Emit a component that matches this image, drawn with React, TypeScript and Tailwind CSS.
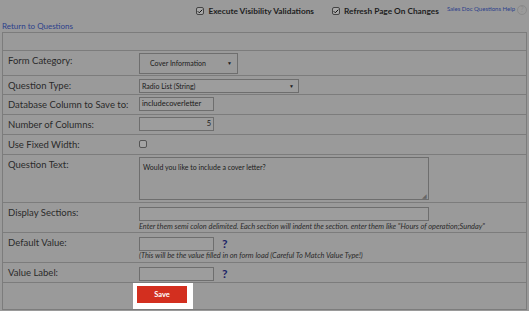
import { Check } from 'lucide-react'

const font = { fontFamily: 'Lato, "Open Sans", Arial, sans-serif' }

function Box({ checked }: { checked?: boolean }) {
  return (
    <span className="inline-flex w-[8px] h-[8px] items-center justify-center rounded-[2px] border border-[#444] bg-[#a8a8a8]">
      {checked && <Check size={7} strokeWidth={4} className="text-[#111]" />}
    </span>
  )
}

function Help() {
  return <span className="ml-[8px] text-[12px] font-bold leading-none text-[#1c2466]">?</span>
}

function Row({ label, h, children }: { label: string; h: string; children?: React.ReactNode }) {
  return (
    <div className={`flex border-t border-[#7c7c7c] ${h}`}>
      <div className="w-[134px] shrink-0 whitespace-nowrap pl-[5px] pt-[4px] text-[9.5px] leading-[12px] text-[#2a2a2a]">{label}</div>
      <div className="flex-1 pt-[2px]">{children}</div>
    </div>
  )
}

const input = 'h-[14px] border border-[#6e6e6e] bg-[#9d9d9d] text-[7.5px] leading-[12px] text-[#1a1a1a] px-[2px]'

export default function App() {
  return (
    <div className="w-[529px] h-[311px] overflow-hidden bg-[#9a9a9a]" style={font}>
      <div className="flex items-center justify-end h-[21px] pr-[2px] pt-[1px]">
        <div className="flex shrink-0 items-center mr-[18px] text-[8.3px] font-bold text-[#1e1e1e]">
          <Box checked />
          <span className="ml-[4px]">Execute Visibility Validations</span>
        </div>
        <div className="flex shrink-0 items-center mr-[8px] text-[8.3px] font-bold text-[#1e1e1e]">
          <Box checked />
          <span className="ml-[4px]">Refresh Page On Changes</span>
        </div>
        <span className="shrink-0 text-[6px] text-[#2c3f8c] -mt-[5px]">Sales Doc Questions Help</span>
        <span className="shrink-0 ml-[2px] -mt-[3px] inline-flex w-[10px] h-[10px] items-center justify-center rounded-full border border-[#8a8a8a] text-[7px] leading-none text-[#8a8a8a]">?</span>
      </div>
      <div className="pl-[2px] h-[11px] text-[8px] leading-[10px] text-[#2c3f8c]">Return to Questions</div>

      <div className="ml-[2px] mr-[2px] border-l border-r border-b border-[#7c7c7c]">
        <div className="h-[18px] border-t border-[#7c7c7c]" />
        <Row label="Form Category:" h="h-[25px]">
          <div className="ml-[2px] flex items-center justify-between w-[99px] h-[21px] border border-[#6e6e6e] pl-[10px] pr-[5px] text-[7px] text-[#1a1a1a]">
            <span>Cover Information</span>
            <span className="text-[5px]">▼</span>
          </div>
        </Row>
        <Row label="Question Type:" h="h-[19px]">
          <div className={`${input} ml-[2px] mt-[1px] w-[160px] h-[12px] flex items-center justify-between`}>
            <span className="text-[7px]">Radio List (String)</span>
            <span className="text-[5px] pr-[2px]">▼</span>
          </div>
        </Row>
        <Row label="Database Column to Save to:" h="h-[20px]">
          <div className={`${input} ml-[2px] w-[75px] flex items-center`}>includecoverletter</div>
        </Row>
        <Row label="Number of Columns:" h="h-[20px]">
          <div className={`${input} ml-[2px] w-[75px] flex items-center justify-end`}>5</div>
        </Row>
        <Row label="Use Fixed Width:" h="h-[20px]">
          <div className="ml-[2px] mt-[3px] w-[8px] h-[8px] rounded-[2px] border border-[#555] bg-[#a4a4a4]" />
        </Row>
        <Row label="Question Text:" h="h-[48px]">
          <div className="relative ml-[2px] w-[290px] h-[43px] border border-[#6e6e6e] px-[3px] pt-[4px] text-[7px] leading-[10px] text-[#1a1a1a]">
            Would you like to include a cover letter?
            <span className="absolute right-[1px] bottom-0 text-[6px] leading-none text-[#666]">◢</span>
          </div>
        </Row>
        <Row label="Display Sections:" h="h-[30px]">
          <div className={`${input} ml-[2px] mt-[2px] w-[290px] h-[13px]`} />
          <div className="ml-[2px] mt-[1px] text-[7.4px] italic leading-[10px] text-[#2a2a2a]">
            Enter them semi colon delimited. Each section will indent the section. enter them like "Hours of operation;Sunday"
          </div>
        </Row>
        <Row label="Default Value:" h="h-[30px]">
          <div className="ml-[2px] mt-[2px] flex items-center">
            <div className={`${input} w-[75px] h-[14px]`} />
            <Help />
          </div>
          <div className="ml-[2px] text-[7.4px] italic leading-[10px] text-[#2a2a2a]">
            (This will be the value filled in on form load (Careful To Match Value Type!)
          </div>
        </Row>
        <Row label="Value Label:" h="h-[20px]">
          <div className="ml-[2px] mt-[2px] flex items-center">
            <div className={`${input} w-[75px] h-[13px]`} />
            <Help />
          </div>
        </Row>
        <div className="flex h-[27px] border-t border-[#7c7c7c]">
          <div className="w-[130px] shrink-0" />
          <div className="w-[60px] bg-white pl-[4px] pt-[3px]">
            <button className="block w-[50px] h-[17px] bg-[#d32f1f] text-[7.5px] leading-none font-bold text-white">Save</button>
          </div>
        </div>
      </div>
    </div>
  )
}
